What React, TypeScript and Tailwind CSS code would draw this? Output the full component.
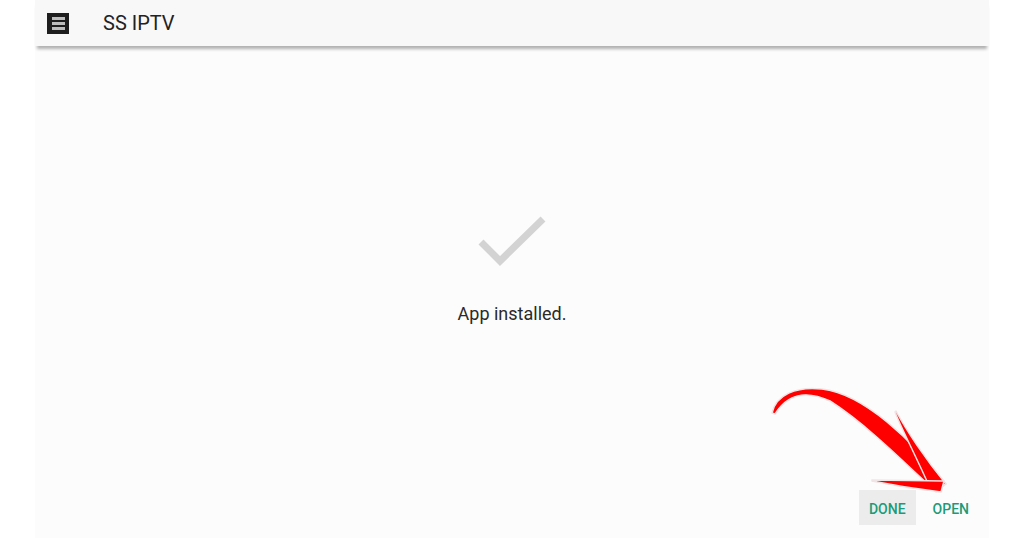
import React from 'react'

function MenuIcon() {
  return (
    <div className="flex h-[21px] w-[22px] flex-col items-center justify-center gap-[2px] bg-[#1e1e1e]">
      <span className="h-[3px] w-[13px] bg-[#bdbdbd]" />
      <span className="h-[3px] w-[13px] bg-[#bdbdbd]" />
      <span className="h-[3px] w-[13px] bg-[#bdbdbd]" />
    </div>
  )
}

function Check() {
  return (
    <svg width="74" height="56" viewBox="0 0 74 56" aria-hidden>
      <path d="M6 30 L25 49 L68 7" fill="none" stroke="#d3d3d3" strokeWidth="7" />
    </svg>
  )
}

// red hand-drawn arrow pointing at OPEN
function Arrow() {
  return (
    <svg
      className="pointer-events-none absolute left-0 top-0"
      width="1024"
      height="538"
      viewBox="0 0 1024 538"
      aria-hidden
    >
      <g fill="#ff0000" stroke="#f1e4e4" strokeWidth="1.5" strokeLinejoin="round">
        <path d="M772,413 C776,395 796,386 822,389 C864,394 912,440 946,484 L936,492 C904,462 866,424 830,401 C806,390 788,393 775,414 Z" />
        <path d="M896,411 C906,430 926,460 946,484 L930,488 C916,456 902,430 895,412 Z" />
        <path d="M872,480 L944,481 L941,492 C916,489 892,485 872,481 Z" />
      </g>
    </svg>
  )
}

export default function App() {
  return (
    <div className="relative h-[538px] w-[1024px] overflow-hidden bg-white font-['Roboto',sans-serif]">
      <div className="ml-[35px] flex h-full w-[954px] flex-col bg-[#fcfcfc]">
        <header className="relative z-10 flex h-[46px] shrink-0 items-center bg-[#f8f8f8] pl-[12px] shadow-[0_5px_3px_-2px_rgba(0,0,0,0.3)]">
          <MenuIcon />
          <h1 className="ml-[34px] text-[20px] leading-none text-[#222]">SS IPTV</h1>
        </header>

        <main className="flex flex-1 flex-col items-center pt-[166px]">
          <Check />
          <p className="mt-[37px] text-[18px] leading-none text-[#2a2a2a]">App installed.</p>
        </main>

        <div className="mb-[13px] flex justify-end gap-[7px] pr-[10px]">
          <button className="h-[35px] bg-[#ececec] px-[10px] pt-[3px] text-[14px] font-medium text-[#1b9b78]">
            DONE
          </button>
          <button className="h-[35px] px-[10px] pt-[3px] text-[14px] font-medium text-[#1b9b78]">OPEN</button>
        </div>
      </div>
      <Arrow />
    </div>
  )
}
